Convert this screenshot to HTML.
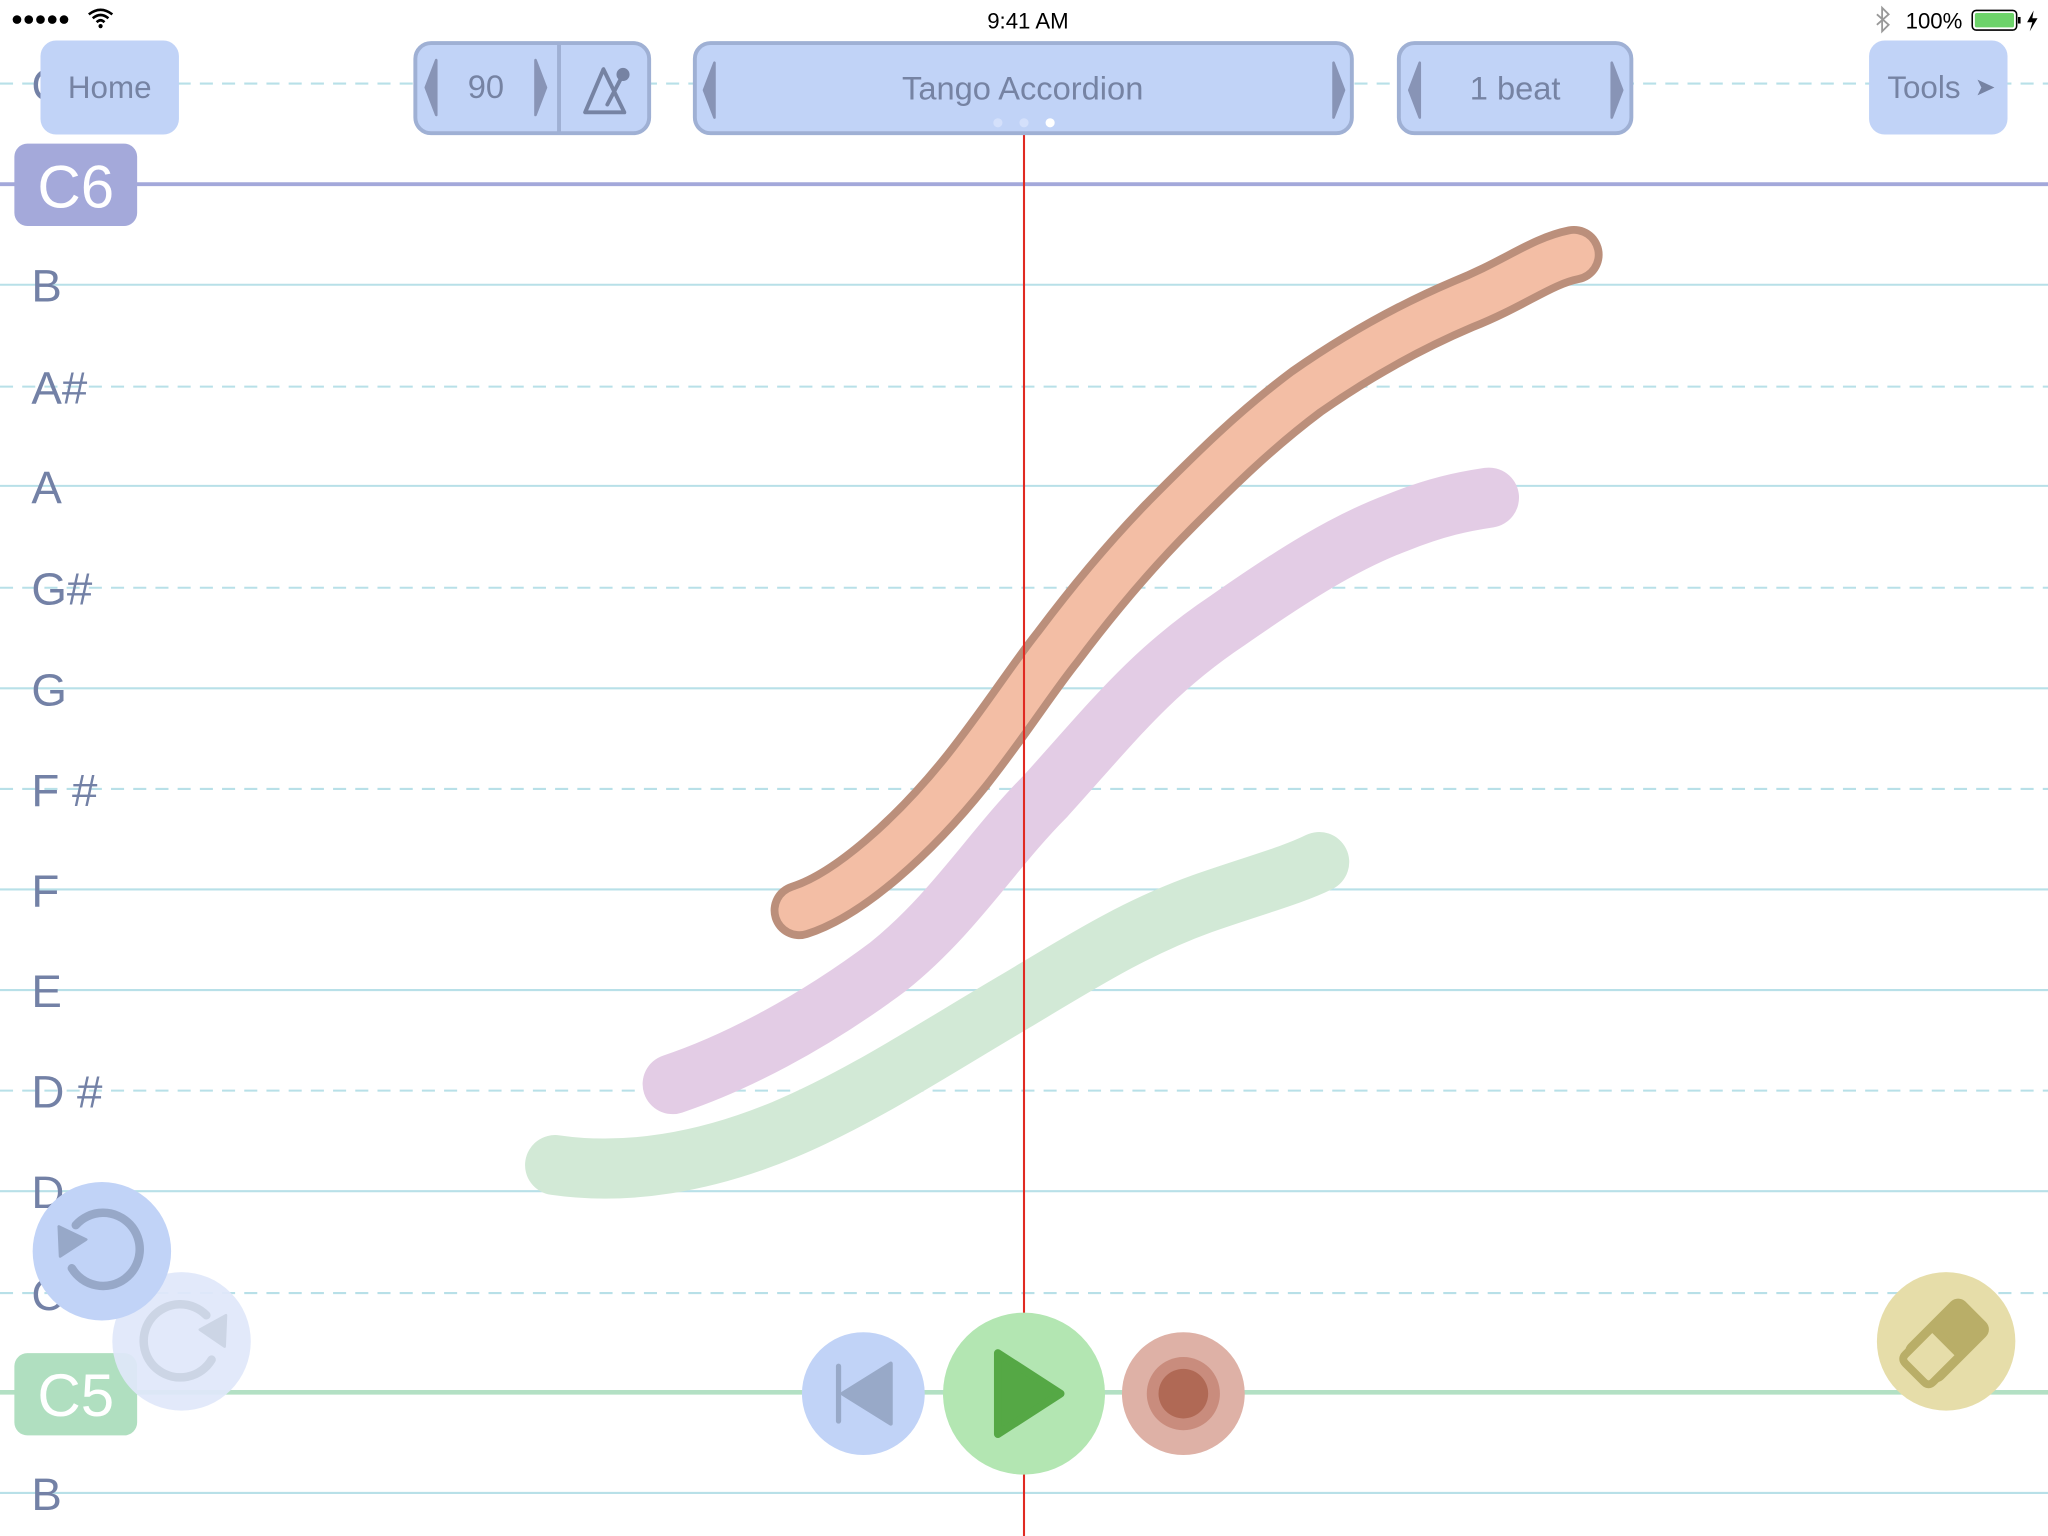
<!DOCTYPE html>
<html><head><meta charset="utf-8"><style>
html,body{margin:0;padding:0;background:#fff;overflow:hidden;width:2048px;height:1536px}
svg{display:block}
text{font-family:"Liberation Sans",sans-serif}
</style></head><body>
<svg width="2048" height="1536" viewBox="0 0 1568 1176" xmlns="http://www.w3.org/2000/svg">
<rect width="1568" height="1176" fill="#fff"/>
<g stroke="#b8e0e8" stroke-width="1.6" fill="none">
<line x1="0" y1="64" x2="1568" y2="64" stroke-dasharray="10 7"/>
<line x1="0" y1="218" x2="1568" y2="218"/>
<line x1="0" y1="296" x2="1568" y2="296" stroke-dasharray="10 7"/>
<line x1="0" y1="372" x2="1568" y2="372"/>
<line x1="0" y1="450" x2="1568" y2="450" stroke-dasharray="10 7"/>
<line x1="0" y1="527" x2="1568" y2="527"/>
<line x1="0" y1="604" x2="1568" y2="604" stroke-dasharray="10 7"/>
<line x1="0" y1="681" x2="1568" y2="681"/>
<line x1="0" y1="758" x2="1568" y2="758"/>
<line x1="0" y1="835" x2="1568" y2="835" stroke-dasharray="10 7"/>
<line x1="0" y1="912" x2="1568" y2="912"/>
<line x1="0" y1="990" x2="1568" y2="990" stroke-dasharray="10 7"/>
<line x1="0" y1="1143" x2="1568" y2="1143"/>
</g>
<line x1="0" y1="141" x2="1568" y2="141" stroke="#a3a8da" stroke-width="3"/>
<line x1="0" y1="1066" x2="1568" y2="1066" stroke="#b3e0c4" stroke-width="3.5"/>

<g fill="#7381a6" font-size="35">
<text x="24" y="77">C</text>
<text x="24" y="231">B</text>
<text x="24" y="309">A#</text>
<text x="24" y="385">A</text>
<text x="24" y="463">G#</text>
<text x="24" y="540">G</text>
<text x="24" y="617">F #</text>
<text x="24" y="694">F</text>
<text x="24" y="771">E</text>
<text x="24" y="848">D #</text>
<text x="24" y="925">D</text>
<text x="24" y="1003">C#</text>
<text x="24" y="1156">B</text>
</g>

<!-- curves -->
<path d="M425,892 C480,900 540,890 600,865 C660,840 720,800 780,765 C830,735 870,710 920,692 C960,678 990,670 1010,660" stroke="#d2e9d6" stroke-width="46" stroke-linecap="round" fill="none"/>
<path d="M515,830 C560,815 620,785 680,740 C730,700 760,650 800,610 C850,555 880,515 940,475 C990,440 1030,415 1070,400 C1100,388 1120,384 1140,381" stroke="#e3cce5" stroke-width="46" stroke-linecap="round" fill="none"/>
<path d="M612,697 C650,685 700,640 740,590 C770,552 790,520 810,495 C840,455 870,420 900,390 C930,360 960,330 1000,300 C1040,272 1080,250 1120,233 C1160,217 1180,200 1205,195" stroke="#bb8f7b" stroke-width="44" stroke-linecap="round" fill="none"/>
<path d="M612,697 C650,685 700,640 740,590 C770,552 790,520 810,495 C840,455 870,420 900,390 C930,360 960,330 1000,300 C1040,272 1080,250 1120,233 C1160,217 1180,200 1205,195" stroke="#f3bea5" stroke-width="32" stroke-linecap="round" fill="none"/>

<!-- red playhead -->
<line x1="784" y1="103" x2="784" y2="1176" stroke="#e02a22" stroke-width="1.6"/>

<!-- note labels -->
<rect x="11" y="110" width="94" height="63" rx="10" fill="#a4a9da"/>
<text x="58" y="159" font-size="46" fill="#fff" text-anchor="middle">C6</text>
<rect x="11" y="1036" width="94" height="63" rx="10" fill="#b0dfc0"/>
<text x="58" y="1084" font-size="46" fill="#fff" text-anchor="middle">C5</text>

<!-- top buttons -->
<rect x="31" y="31" width="106" height="72" rx="12" fill="#c1d3f7"/>
<text x="84" y="75" font-size="24" fill="#7683a3" text-anchor="middle">Home</text>

<rect x="318" y="33" width="179" height="69" rx="12" fill="#c1d3f7" stroke="#9fb0d4" stroke-width="3"/>
<line x1="428" y1="33" x2="428" y2="102" stroke="#9fb0d4" stroke-width="3"/>
<path d="M334,46 L334,88 L326,67 Z" fill="#8894b6" stroke="#8894b6" stroke-width="2" stroke-linejoin="round"/>
<path d="M410,46 L410,88 L418,67 Z" fill="#8894b6" stroke="#8894b6" stroke-width="2" stroke-linejoin="round"/>
<text x="372" y="75" font-size="25" fill="#7683a3" text-anchor="middle">90</text>
<path d="M448,86 L478,86 L462,53 Z" fill="none" stroke="#7683a3" stroke-width="3" stroke-linejoin="round"/>
<line x1="465" y1="80" x2="476" y2="59" stroke="#7683a3" stroke-width="3" stroke-linecap="round"/>
<circle cx="477" cy="57" r="5" fill="#7683a3"/>

<rect x="532" y="33" width="503" height="69" rx="12" fill="#c1d3f7" stroke="#9fb0d4" stroke-width="3"/>
<path d="M547,48 L547,90 L539,69 Z" fill="#8894b6" stroke="#8894b6" stroke-width="2" stroke-linejoin="round"/>
<path d="M1021,48 L1021,90 L1029,69 Z" fill="#8894b6" stroke="#8894b6" stroke-width="2" stroke-linejoin="round"/>
<text x="783" y="76" font-size="25" fill="#7683a3" text-anchor="middle">Tango Accordion</text>
<circle cx="764" cy="94" r="3.5" fill="#d4e0fb"/>
<circle cx="784" cy="94" r="3.5" fill="#d4e0fb"/>
<circle cx="804" cy="94" r="3.5" fill="#fff"/>

<rect x="1071" y="33" width="178" height="69" rx="12" fill="#c1d3f7" stroke="#9fb0d4" stroke-width="3"/>
<path d="M1087,48 L1087,90 L1079,69 Z" fill="#8894b6" stroke="#8894b6" stroke-width="2" stroke-linejoin="round"/>
<path d="M1234,48 L1234,90 L1242,69 Z" fill="#8894b6" stroke="#8894b6" stroke-width="2" stroke-linejoin="round"/>
<text x="1160" y="76" font-size="25" fill="#7683a3" text-anchor="middle">1 beat</text>

<rect x="1431" y="31" width="106" height="72" rx="12" fill="#c1d3f7"/>
<text x="1473" y="75" font-size="24" fill="#7683a3" text-anchor="middle">Tools</text>
<path d="M1514,61 L1527,67 L1514,73 L1517,67 Z" fill="#7683a3"/>

<!-- status bar -->
<g fill="#000">
<circle cx="13" cy="15" r="3.3"/><circle cx="22" cy="15" r="3.3"/><circle cx="31" cy="15" r="3.3"/><circle cx="40" cy="15" r="3.3"/><circle cx="49" cy="15" r="3.3"/>
</g>
<path d="M68,11 Q77,4 86,11 M71,14 Q77,9 83,14 M74,17 Q77,14 80,17" stroke="#000" stroke-width="2" fill="none"/>
<circle cx="77" cy="20" r="1.6"/>
<text x="787" y="22" font-size="17" fill="#000" text-anchor="middle">9:41 AM</text>
<path d="M1437,11 L1446,19 L1441,24 L1441,6 L1446,11 L1437,19" stroke="#999" stroke-width="1.4" fill="none"/>
<text x="1459" y="22" font-size="17" fill="#000">100%</text>
<rect x="1510" y="8" width="34" height="15" rx="3" fill="none" stroke="#000" stroke-width="1.2"/>
<rect x="1512" y="10" width="30" height="11" rx="1.5" fill="#6dd36a"/>
<rect x="1545" y="13" width="2" height="5" fill="#000"/>
<path d="M1557,8 L1552,17 L1556,17 L1554,24 L1560,14 L1556,14 Z" fill="#000"/>

<!-- undo/redo -->
<circle cx="139" cy="1027" r="53" fill="#dfe7fa" opacity="0.92"/>
<path d="M162,1041 A28,28 0 1 1 158,1007" stroke="#ccd5e5" stroke-width="6.5" fill="none" stroke-linecap="round"/>
<path d="M153,1018 L173,1007 L172,1031 Z" fill="#ccd5e5" stroke="#ccd5e5" stroke-width="2" stroke-linejoin="round"/>
<circle cx="78" cy="958" r="53" fill="#c1d3f7"/>
<path d="M55,971 A28,28 0 1 0 58,938" stroke="#97a8c8" stroke-width="6.5" fill="none" stroke-linecap="round"/>
<path d="M45,939 L46,962 L66,949 Z" fill="#97a8c8" stroke="#97a8c8" stroke-width="2" stroke-linejoin="round"/>

<!-- transport -->
<circle cx="661" cy="1067" r="47" fill="#c1d3f7"/>
<rect x="640" y="1044" width="4" height="46" rx="2" fill="#98a9c8"/>
<path d="M682,1044 L682,1090 L645,1067 Z" fill="#98a9c8" stroke="#98a9c8" stroke-width="3" stroke-linejoin="round"/>
<circle cx="784" cy="1067" r="62" fill="#b3e6b2"/>
<path d="M764,1036 L764,1098 L812,1067 Z" fill="#55a845" stroke="#55a845" stroke-width="6" stroke-linejoin="round"/>
<circle cx="906" cy="1067" r="47" fill="#deb1a6"/>
<circle cx="906" cy="1067" r="28" fill="#c98c7d"/>
<circle cx="906" cy="1067" r="19" fill="#b06955"/>

<!-- eraser -->
<circle cx="1490" cy="1027" r="53" fill="#e6dda9"/>
<g transform="rotate(-45 1490 1027)">
<rect x="1460" y="1008" width="62" height="38" rx="8" fill="#b9ae68"/>
<path d="M1461,1012 L1490,1012 L1490,1042 L1461,1042 Q1456,1042 1456,1037 L1456,1017 Q1456,1012 1461,1012 Z" fill="#e6dda9" stroke="#b9ae68" stroke-width="6"/>
</g>
</svg>
</body></html>
